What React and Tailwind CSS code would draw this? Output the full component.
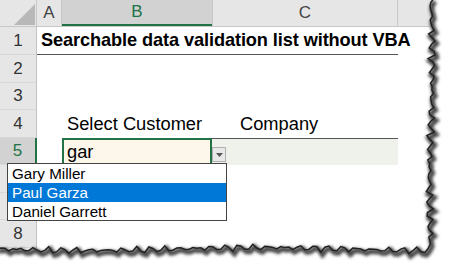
import React from 'react';

const ROW_H = 'h-[27.5px]';

// jagged torn-paper edge, computed once
const noise = (i, seed) =>
  2.2 * Math.sin(i * 1.7 + seed) + 1.4 * Math.sin(i * 4.3 + seed * 2) + 0.9 * Math.sin(i * 9.1 + seed * 3);

const buildEdge = () => {
  const pts = [];
  for (let y = -2, i = 0; y <= 244; y += 3.5, i++) {
    pts.push([430 + noise(i, 0.4) + 1.5 * Math.sin(y / 40), y]);
  }
  pts.push([427, 248]);
  for (let x = 424, i = 0; x >= -4; x -= 4, i++) {
    pts.push([x, 248 + noise(i, 1.3) * 0.9 + 1.5 * Math.sin(x / 55)]);
  }
  return pts;
};

const edge = buildEdge();
const edgeLine = 'M' + edge.map(([x, y]) => `${x.toFixed(1)},${y.toFixed(1)}`).join(' L');
const outside = `M-10,-10 L460,-10 L460,282 L-10,282 Z ${edgeLine} L-10,260 L-10,-10 Z`;

const RowHead = ({ n, active }) => (
  <div
    className={`w-[37px] shrink-0 ${ROW_H} flex items-center justify-center border-b border-[#d8d8d8] ${
      active ? 'bg-[#d2d2d2] text-[#217346] border-r-2 border-r-[#217346]' : 'bg-[#e6e6e6] text-[#333] border-r border-r-[#c2c2c2]'
    } text-[17px]`}
  >
    {n}
  </div>
);

export default function App() {
  return (
    <div
      className="relative w-[450px] h-[272px] bg-white overflow-hidden text-black"
      style={{ fontFamily: '"Liberation Sans", Arial, sans-serif' }}
    >
      {/* column headers */}
      <div className="flex h-[27px] bg-[#e6e6e6] text-[#444] text-[17px] border-b border-[#c8c8c8]">
        <div className="w-[37px] shrink-0 relative border-r border-[#c8c8c8]">
          <svg className="absolute left-[14px] top-[4px]" width="21" height="21" viewBox="0 0 21 21">
            <polygon points="21,0 21,21 0,21" fill="#b8b8b8" />
          </svg>
        </div>
        <div className="w-[25px] shrink-0 flex items-center justify-center border-r border-[#c8c8c8]">A</div>
        <div className="w-[150px] shrink-0 flex items-center justify-center bg-[#d2d2d2] text-[#217346] border-b-2 border-[#217346]">
          B
        </div>
        <div className="w-[186px] shrink-0 flex items-center justify-center border-l border-r border-[#c8c8c8]">C</div>
        <div className="flex-1" />
      </div>

      {/* row 1 */}
      <div className="flex">
        <RowHead n={1} />
        <div className="flex-1 flex">
          <div className="w-[361px] shrink-0 border-b border-[#555] flex items-center pl-[4px] whitespace-nowrap font-bold text-[18.2px] tracking-[-0.1px] overflow-visible">
            Searchable data validation list without VBA
          </div>
        </div>
      </div>
      <div className="flex">
        <RowHead n={2} />
      </div>
      <div className="flex">
        <RowHead n={3} />
      </div>
      {/* row 4 */}
      <div className="flex">
        <RowHead n={4} />
        <div className="w-[25px] shrink-0" />
        <div className="w-[150px] shrink-0 flex items-center pl-[5px] text-[18.3px] whitespace-nowrap">Select Customer</div>
        <div className="w-[186px] shrink-0 flex items-center pl-[28px] text-[18.3px]">Company</div>
      </div>
      {/* row 5 */}
      <div className="flex">
        <RowHead n={5} active />
        <div className="w-[25px] shrink-0" />
        <div className="w-[150px] shrink-0 bg-[#fdf6ea] border-2 border-[#217346] flex items-center pl-[3px] text-[18.3px] h-[27.5px]">
          gar
        </div>
        <div className="w-[186px] shrink-0 bg-[#eef2ea] border-t border-[#555] h-[27.5px]" />
      </div>
      <div className="flex">
        <RowHead n={6} />
      </div>
      <div className="flex">
        <RowHead n={7} />
      </div>
      <div className="flex">
        <RowHead n={8} />
      </div>

      {/* dropdown arrow button */}
      <div className="absolute left-[212px] top-[147px] w-[14px] h-[15px] bg-[#e8e8e8] border border-[#b0b0b0] flex items-center justify-center">
        <svg width="7" height="4" viewBox="0 0 7 4">
          <polygon points="0,0 7,0 3.5,4" fill="#555" />
        </svg>
      </div>

      {/* dropdown list */}
      <div className="absolute left-[7px] top-[163px] w-[220px] bg-white border border-[#444] text-[15.2px] leading-[19px]">
        <div className="pl-[4px] h-[19px]">Gary Miller</div>
        <div className="pl-[4px] h-[19px] bg-[#0078d7] text-white">Paul Garza</div>
        <div className="pl-[4px] h-[18px]">Daniel Garrett</div>
      </div>

      {/* torn paper edge */}
      <svg className="absolute inset-0 pointer-events-none" width="450" height="272" viewBox="0 0 450 272">
        <defs>
          <filter id="blur" x="-10%" y="-10%" width="120%" height="120%">
            <feGaussianBlur stdDeviation="1.6" />
          </filter>
        </defs>
        <path d={outside} fill="#fff" fillRule="evenodd" />
        <path d={edgeLine} transform="translate(2.5,3.5)" fill="none" stroke="#4a4a4a" strokeWidth="5" filter="url(#blur)" />
        <path d={edgeLine} transform="translate(0.8,1)" fill="none" stroke="#222" strokeWidth="1.5" />
      </svg>
    </div>
  );
}
